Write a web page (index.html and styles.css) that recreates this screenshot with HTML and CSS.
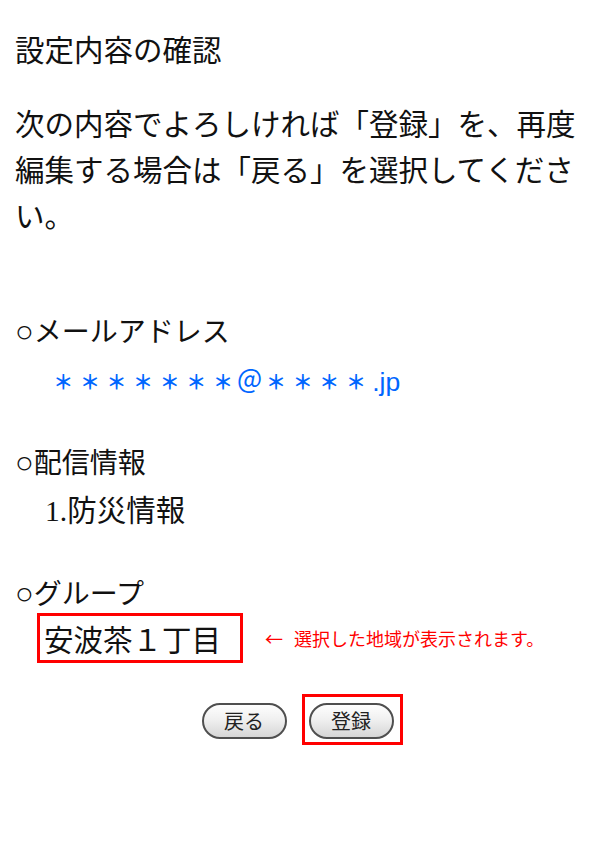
FILE: index.html
```html
<!DOCTYPE html>
<html lang="ja">
<head>
<meta charset="utf-8">
<title>設定内容の確認</title>
<link rel="stylesheet" href="styles.css">
</head>
<body>
<main class="page">
  <p class="title">設定内容の確認</p>
  <p class="lead">次の内容でよろしければ「登録」を、再度編集する場合は「戻る」を選択してください。</p>

  <section class="item item-mail">
    <h2 class="label"><span class="mark">○</span>メールアドレス</h2>
    <p class="mail"><span class="stars">＊＊＊＊＊＊＊</span>＠<span class="stars">＊＊＊＊</span><span class="dom">.jp</span></p>
  </section>

  <section class="item item-info">
    <h2 class="label"><span class="mark">○</span>配信情報</h2>
    <p class="entry"><span class="num">1.</span>防災情報</p>
  </section>

  <section class="item item-group">
    <h2 class="label"><span class="mark">○</span>グループ</h2>
    <div class="group-row">
      <div class="region">安波茶１丁目</div>
      <p class="note"><span class="arrow">←</span>選択した地域が表示されます。</p>
    </div>
  </section>

  <div class="actions">
    <button class="btn" type="button">戻る</button>
    <span class="pick"><button class="btn" type="button">登録</button></span>
  </div>
</main>
</body>
</html>
```

FILE: styles.css
```css
html, body {
  margin: 0;
  padding: 0;
  background: #ffffff;
}

body {
  font-family: "Noto Sans CJK JP", "Noto Sans", sans-serif;
  color: #111111;
}

.page {
  padding: 25px 15px 80px 15px;
}

p, h2 {
  margin: 0;
  font-weight: normal;
}

.title {
  font-size: 29.5px;
  line-height: 46px;
}

.lead {
  margin-top: 28px;
  font-size: 29.5px;
  line-height: 46px;
}

.label {
  font-size: 28px;
  line-height: 46px;
}

.mark {
  font-family: "Liberation Sans", sans-serif;
  font-size: 31px;
  line-height: 1;
}

.item-mail {
  margin-top: 70px;
}

.mail {
  margin-top: 4px;
  padding-left: 35px;
  font-size: 26.6px;
  line-height: 46px;
  color: #0066ff;
}

.stars {
  font-size: 20px;
  font-weight: 700;
  line-height: 1;
  letter-spacing: 6.6px;
  padding-left: 3.3px;
  margin-right: -3.3px;
  position: relative;
  top: -1px;
}

.dom {
  font-family: "Liberation Sans", sans-serif;
  line-height: 1;
  margin-left: 3px;
}

.item-info {
  margin-top: 35px;
}

.entry {
  margin-top: 1px;
  padding-left: 30px;
  font-size: 29.5px;
  line-height: 46px;
}

.num {
  font-family: "Liberation Serif", serif;
  line-height: 1;
}

.item-group {
  margin-top: 38px;
}

.group-row {
  display: flex;
  align-items: center;
  margin-top: -2px;
}

.region {
  box-sizing: border-box;
  width: 206px;
  height: 50px;
  margin-left: 22px;
  padding-left: 4px;
  border: 3px solid #ff0000;
  font-size: 29.5px;
  line-height: 44px;
}

.note {
  margin-left: 22px;
  font-size: 18px;
  line-height: 24px;
  color: #ff0000;
}

.arrow {
  margin-right: 11px;
}

.actions {
  display: flex;
  justify-content: center;
  align-items: flex-start;
  gap: 22px;
  margin-top: 40px;
}

.btn {
  box-sizing: border-box;
  width: 85px;
  height: 36px;
  padding: 0;
  border: 2px solid #4f4f4f;
  border-radius: 18px;
  background: linear-gradient(#fefefe 0%, #f0f0f0 45%, #d6d6d6 100%);
  font-family: "Noto Sans CJK JP", sans-serif;
  font-size: 20px;
  line-height: 30px;
  color: #222222;
}

.pick {
  position: relative;
  display: flex;
}

.pick::after {
  content: "";
  position: absolute;
  left: -6.5px;
  right: -9.5px;
  top: -9px;
  bottom: -6px;
  border: 3px solid #ff0000;
  pointer-events: none;
}
```
